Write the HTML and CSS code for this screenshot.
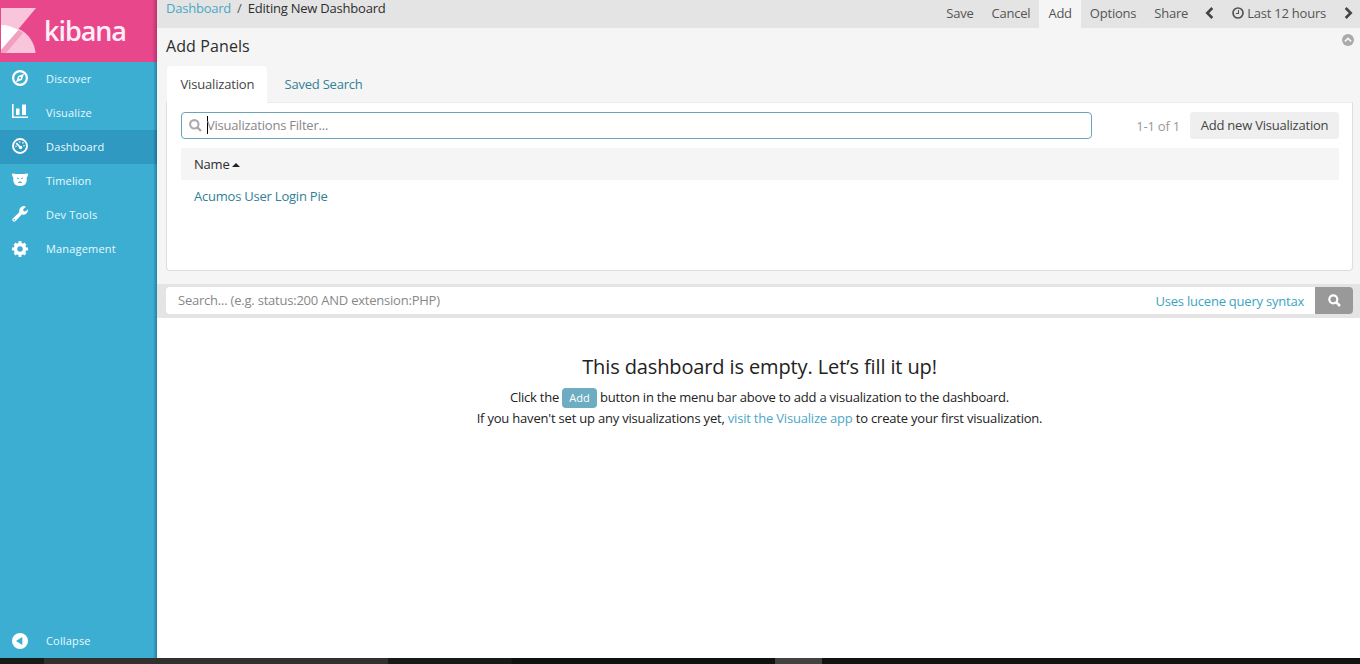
FILE: index.html
```html
<!DOCTYPE html>
<html lang="en">
<head>
<meta charset="utf-8">
<title>Kibana</title>
<link rel="stylesheet" href="styles.css">
</head>
<body>
<div class="app">
  <nav class="sidebar">
    <div class="brand">
      <svg class="brand-mark" width="36" height="46" viewBox="0 0 36 46">
        <path d="M1 0H36L1 42Z" fill="#f9c5db"/>
        <path d="M1 17C21 17 34 29 35.500 45H1Z" fill="#f9c5db"/>
        <path d="M1 17C8 17 13 19 18.500 22L1 42Z" fill="#fff"/>
        <path d="M18.500 22L23 25L6 45H1V42Z" fill="#f0a0c0"/>
      </svg>
      <span class="brand-name">kibana</span>
    </div>
    <a class="item"><svg class="icon" viewBox="0 0 16 16"><circle cx="8" cy="8" r="6.900" fill="none" stroke="#fff" stroke-width="2.200"/><path fill="#fff" fill-rule="evenodd" d="M12 3.800L9.900 9.900L4 12.200L6.100 6.100ZM8 7A1 1 0 1 0 8 9A1 1 0 1 0 8 7Z"/></svg><span>Discover</span></a>
    <a class="item"><svg class="icon" viewBox="0 0 16 16"><path fill="#fff" d="M0 0H1.600V12.400H16V14H0ZM4 4.500H7.500V11H4ZM10 .500H14V11H10Z"/></svg><span>Visualize</span></a>
    <a class="item active"><svg class="icon" viewBox="0 0 16 16"><circle cx="8" cy="8" r="7" fill="none" stroke="#fff" stroke-width="1.900"/><path d="M4.300 5.100L8.500 9.500" stroke="#fff" stroke-width="1.800"/><circle cx="8.600" cy="9.500" r="1.700" fill="#fff"/><g fill="#fff"><circle cx="7.700" cy="4" r=".8"/><circle cx="10.900" cy="4.900" r=".8"/><circle cx="12" cy="7.800" r=".8"/><circle cx="4" cy="8.200" r=".8"/></g></svg><span>Dashboard</span></a>
    <a class="item"><svg class="icon" viewBox="0 0 16 16"><path fill="#fff" fill-rule="evenodd" d="M0 1.800Q1.500 1 3.500 1.900H12.500Q14.500 1 16 1.800Q16 5 14.700 5.800Q15.400 10 13.400 12.200Q8 16 2.600 12.200Q.6 10 1.300 5.800Q0 5 0 1.800ZM5 5.600V6.700H7V6.200ZM11 5.600V6.700H9V6.200ZM6 10.200L8 9.200L10 10.200L9.600 11.300L8 10.700L6.400 11.300Z"/></svg><span>Timelion</span></a>
    <a class="item"><svg class="icon" viewBox="0 0 16 16"><path fill="#fff" fill-rule="evenodd" d="M10.500 .2Q12.500 -.3 14 .7L11.300 3V5L13.300 5.500L16 3.200Q16.200 6.500 14 8Q12 9.300 9.700 8.500L3.600 15Q2.200 16.400 .8 15.100Q-.6 13.700 .8 12.400L7.300 6.200Q6.500 2 10.500 .2ZM2.200 12.900A.8 .8 0 1 0 2.200 14.500A.8 .8 0 1 0 2.200 12.900Z"/></svg><span>Dev Tools</span></a>
    <a class="item"><svg class="icon" viewBox="0 0 16 16"><circle cx="8" cy="8" r="4.500" fill="none" stroke="#fff" stroke-width="3.500"/><path d="M8 0V4M8 12V16M0 8H4M12 8H16M2.600 2.600L4.600 4.600M11.400 11.400L13.400 13.400M2.600 13.400L4.600 11.400M11.400 4.600L13.400 2.600" stroke="#fff" stroke-width="2.900"/></svg><span>Management</span></a>
    <a class="item collapse"><svg class="icon" viewBox="0 0 16 16"><path fill="#fff" fill-rule="evenodd" d="M8 0A8 8 0 1 0 8 16A8 8 0 1 0 8 0ZM10.300 4V12L4 8Z"/></svg><span>Collapse</span></a>
  </nav>

  <main class="content">
    <header class="topbar">
      <div class="crumbs"><a>Dashboard</a><span class="slash">/</span><span class="current">Editing New Dashboard</span></div>
      <div class="menu">
        <a class="m-save">Save</a><a class="m-cancel">Cancel</a><a class="m-add">Add</a><a class="m-options">Options</a><a class="m-share">Share</a>
        <a class="m-prev"><svg width="9" height="12" viewBox="0 0 9 12"><path d="M7.300 1L2.300 6L7.300 11" fill="none" stroke="#444" stroke-width="2.600"/></svg></a>
        <a class="m-time"><svg width="12" height="12" viewBox="0 0 12 12"><circle cx="6" cy="6" r="5" fill="none" stroke="#555" stroke-width="1.700"/><path d="M6.500 3V6.500H3.800" fill="none" stroke="#555" stroke-width="1.100"/></svg><span>Last 12 hours</span></a>
        <a class="m-next"><svg width="9" height="12" viewBox="0 0 9 12"><path d="M1.700 1L6.700 6L1.700 11" fill="none" stroke="#444" stroke-width="2.600"/></svg></a>
      </div>
    </header>

    <section class="panel">
      <div class="panel-head">
        <h1>Add Panels</h1>
        <svg class="close" width="12" height="12" viewBox="0 0 12 12"><circle cx="6" cy="6" r="6" fill="#aaa"/><path d="M2.900 7.400L6 4.400L9.100 7.400" fill="none" stroke="#f5f5f5" stroke-width="1.800"/></svg>
      </div>
      <div class="tabs"><a class="tab on">Visualization</a><a class="tab">Saved Search</a></div>
      <div class="box">
        <div class="filter-row">
          <div class="filter">
            <svg width="13" height="13" viewBox="0 0 13 13"><circle cx="5.300" cy="5.300" r="4.200" fill="none" stroke="#aaa" stroke-width="2.100"/><path d="M8.400 8.400L12 12" stroke="#aaa" stroke-width="2.400"/></svg>
            <span class="caret"></span><span class="ph">Visualizations Filter...</span>
          </div>
          <span class="count">1-1 of 1</span>
          <button class="new">Add new Visualization</button>
        </div>
        <div class="thead"><span>Name</span><svg width="8" height="4" viewBox="0 0 8 4"><path d="M0 4L4 0L8 4Z" fill="#222"/></svg></div>
        <a class="result">Acumos User Login Pie</a>
      </div>
    </section>

    <div class="search">
      <div class="query"><span class="q-ph">Search... (e.g. status:200 AND extension:PHP)</span><a class="lucene">Uses lucene query syntax</a></div>
      <button class="go"><svg width="13" height="13" viewBox="0 0 13 13"><circle cx="5.300" cy="5.300" r="4" fill="none" stroke="#fff" stroke-width="2.200"/><path d="M8.400 8.400L12 12" stroke="#fff" stroke-width="2.500"/></svg></button>
    </div>

    <section class="empty">
      <h2>This dashboard is empty. Let’s fill it up!</h2>
      <p class="line1"><span>Click the</span><b>Add</b><span>button in the menu bar above to add a visualization to the dashboard.</span></p>
      <p class="line2">If you haven't set up any visualizations yet, <a>visit the Visualize app</a> to create your first visualization.</p>
    </section>
  </main>
</div>
<div class="taskbar"><i class="t1"></i><i class="t2"></i><i class="t3"></i><i class="t4"></i></div>
</body>
</html>
```

FILE: styles.css
```css
* { box-sizing: border-box; }
body { margin: 0; width: 1360px; height: 664px; overflow: hidden; background: #fff; color: #2d2d2d; font: 13px/18px "Open Sans", "Noto Sans", sans-serif; letter-spacing: -.22px; }
h1, h2, p { margin: 0; font-weight: 400; }
button { border: 0; padding: 0; font: inherit; letter-spacing: inherit; }
svg { display: block; flex: none; }
.app { display: flex; height: 658px; }

.sidebar { display: flex; flex-direction: column; width: 157px; background: linear-gradient(to right, transparent 153px, rgba(0,60,80,.38)), #3caed2; flex: none; letter-spacing: .17px; }
.brand { display: flex; height: 62px; padding: 8px 0 0; background: linear-gradient(to right, transparent 152px, rgba(80,0,40,.3)), #e8488b; flex: none; }
.brand-name { margin: 4px 0 0 8px; color: #ffeef6; font-size: 27px; line-height: 38px; font-weight: 600; letter-spacing: -1.05px; }
.item { display: flex; align-items: center; height: 34px; padding-left: 12px; color: #e9f9ff; font-size: 11px; flex: none; }
.item span { margin-left: 18px; }
.icon { width: 16px; height: 16px; margin-bottom: 2px; overflow: visible; }
.active { background: linear-gradient(to right, transparent 153px, rgba(0,40,60,.35)), #2f99c1; }
.item:nth-child(7) .icon, .collapse .icon { margin-bottom: 1px; }
.collapse { margin-top: auto; }

.content { flex: 1; display: flex; flex-direction: column; min-width: 0; }
.topbar { display: flex; justify-content: space-between; height: 28px; background: #e4e4e4; flex: none; }
.crumbs { display: flex; padding-left: 9px; line-height: 17px; }
.crumbs a { color: #4ca7c7; }
.slash { margin: 0 6px; color: #555; }
.menu { display: flex; color: #555; line-height: 18px; }
.menu a { display: flex; align-items: center; padding: 0 9px 2px; }
.menu .m-add { background: #f5f5f5; }
.menu .m-prev { padding: 0 9px 2px 8px; }
.menu .m-next { padding: 0 7px 2px 9px; }
.m-time span { margin-left: 3px; }

.panel { height: 256px; padding: 0 7px 0 9px; background: #f5f5f5; flex: none; }
.panel-head { display: flex; justify-content: space-between; height: 38px; }
.panel-head h1 { font-size: 16px; line-height: 36px; letter-spacing: .1px; }
.close { margin: 6px -1px 0 0; }
.tabs { display: flex; height: 37px; line-height: 37px; padding-left: 1px; position: relative; }
.tab { padding: 0 17.5px; color: #328096; }
.tab.on { width: 100px; padding: 0 0 0 13.5px; background: #fff; color: #444; border-radius: 4px 4px 0 0; letter-spacing: -.17px; }
.box { height: 169px; margin-top: -1px; padding: 9px 13px 0 14px; background: #fff; border: 1px solid #dedede; border-top-color: #ececec; border-radius: 0 0 4px 4px; }
.filter-row { display: flex; align-items: center; height: 27px; }
.filter { display: flex; align-items: center; width: 911px; height: 27px; padding: 0 0 1px 7px; border: 1px solid #6ba5b8; border-radius: 4px; }
.caret { width: 1px; height: 18px; margin-left: 5px; background: #000; }
.ph { color: #888; margin-left: -1px; }
.count { margin-left: auto; margin-right: 10px; color: #999; padding-top: 1px; }
.new { width: 149px; height: 27px; padding-bottom: 2px; border-radius: 3px; background: #efefef; color: #444; }
.thead { display: flex; align-items: center; height: 32px; margin-top: 9px; padding-left: 13px; background: #f5f5f5; }
.thead svg { margin: 1px 0 0 3px; }
.result { display: block; padding: 7px 13px; color: #328096; }

.search { display: flex; height: 34px; padding: 3px 7px 4px 9px; background: #e4e4e4; flex: none; }
.query { flex: 1; display: flex; justify-content: space-between; align-items: center; padding: 0 11px 0 12px; background: #fff; border-radius: 4px 0 0 4px; }
.q-ph { color: #888; padding-bottom: 1px; }
.lucene { color: #3ba5c0; padding-top: 1px; }
.go { display: flex; align-items: center; justify-content: center; width: 38px; background: #999; border-radius: 0 4px 4px 0; }

.empty { padding: 35px 0 0 2px; text-align: center; color: #222; }
.empty h2 { font-size: 20px; line-height: 28px; letter-spacing: -.12px; }
.line1 { display: flex; justify-content: center; align-items: center; margin-top: 6px; height: 22px; }
.line1 span { padding-bottom: 2px; }
.line1 b { width: 35px; height: 20px; margin: 0 3px; border-radius: 4px; background: #6eadc1; color: #fff; font-size: 11px; font-weight: 400; line-height: 20px; letter-spacing: 0; }
.line2 { line-height: 18px; letter-spacing: -.2px; }
.line2 a { color: #4ca7c7; }

.taskbar { display: flex; height: 6px; background: #10130f; }
.t1 { width: 44px; background: #171c19; }
.t2 { width: 344px; background: #30312f; }
.t3 { width: 387px; background: linear-gradient(to right, #171b18 123px, #0e120f 124px); }
.t4 { width: 47px; background: #424242; }
```
